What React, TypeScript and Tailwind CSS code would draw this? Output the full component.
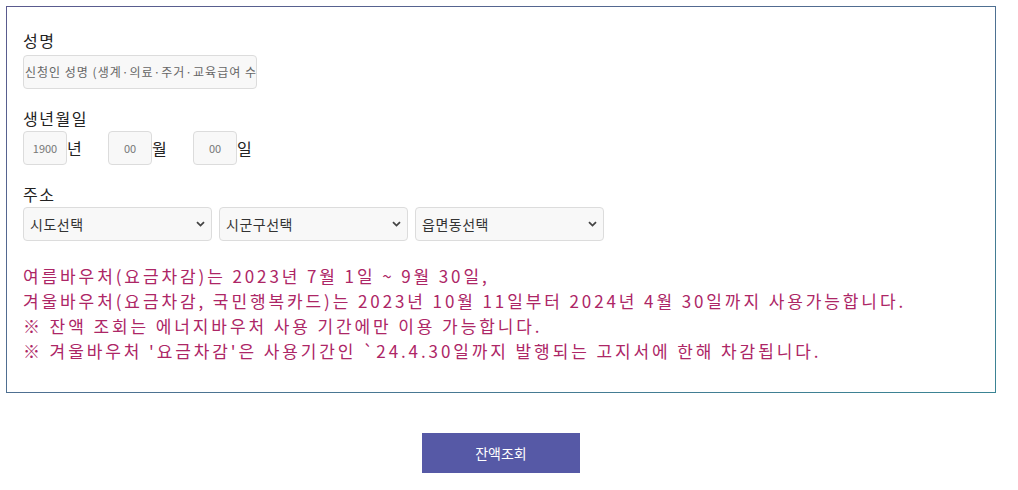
import React from "react";

const Chevron = () => (
  <svg className="pointer-events-none absolute right-[6px] top-1/2 -translate-y-1/2" width="9" height="6" viewBox="0 0 9 6">
    <path d="M1 1.2 L4.5 4.6 L8 1.2" stroke="#444" strokeWidth="1.8" fill="none" />
  </svg>
);

function SelectBox({ label }: { label: string }) {
  return (
    <div className="relative w-[189px] h-[34px] rounded-[4px] border border-[#dcdcdc] bg-[#f8f8f8] flex items-center pl-[6px] text-[14px] text-[#333] tracking-[0.5px]">
      <span>{label}</span>
      <Chevron />
    </div>
  );
}

function DateBox({ value, unit }: { value: string; unit: string }) {
  return (
    <div className="flex items-center w-[85px]">
      <div className="w-[44px] h-[34px] rounded-[4px] border border-[#dcdcdc] bg-[#f8f8f8] flex items-center justify-center text-[11px] text-[#777]">
        {value}
      </div>
      <span className="text-[16px] text-[#222]">{unit}</span>
    </div>
  );
}

export default function App() {
  return (
    <div
      className="w-[1018px] h-[490px] bg-white pt-[6px] pl-[6px]"
      style={{ fontFamily: '"Noto Sans CJK KR", "Noto Sans", sans-serif' }}
    >
      <div className="w-[990px] p-px bg-gradient-to-br from-[#5a5a8e] to-[#3a8494]">
        <div className="bg-white h-[385px] pl-[16px] pt-[22px]">
          <div className="text-[16px] leading-[22px] text-[#222] tracking-[1.5px]">성명</div>
          <div className="mt-[4px] w-[234px] h-[34px] rounded-[4px] border border-[#dcdcdc] bg-[#f8f8f8] flex items-center pl-[1px] text-[12px] text-[#666] overflow-hidden whitespace-nowrap tracking-[1px]">
            신청인 성명 (생계·의료·주거·교육급여 수
          </div>

          <div className="mt-[18px] text-[16px] leading-[22px] text-[#222] tracking-[1.5px]">생년월일</div>
          <div className="mt-[2px] flex">
            <DateBox value="1900" unit="년" />
            <DateBox value="00" unit="월" />
            <DateBox value="00" unit="일" />
          </div>

          <div className="mt-[18px] text-[16px] leading-[22px] text-[#222] tracking-[1.5px]">주소</div>
          <div className="mt-[2px] flex gap-[7px]">
            <SelectBox label="시도선택" />
            <SelectBox label="시군구선택" />
            <SelectBox label="읍면동선택" />
          </div>

          <div className="mt-[22px] text-[17px] leading-[25px] text-[#ad2666] tracking-[2.9px] whitespace-nowrap">
            <div>여름바우처(요금차감)는 2023년 7월 1일 ~ 9월 30일,</div>
            <div>겨울바우처(요금차감, 국민행복카드)는 2023년 10월 11일부터 2024년 4월 30일까지 사용가능합니다.</div>
            <div><span className="font-bold">※</span> 잔액 조회는 에너지바우처 사용 기간에만 이용 가능합니다.</div>
            <div><span className="font-bold">※</span> 겨울바우처 '요금차감'은 사용기간인 `24.4.30일까지 발행되는 고지서에 한해 차감됩니다.</div>
          </div>
        </div>
      </div>
      <div className="w-[990px] flex justify-center mt-[40px]">
        <div className="w-[158px] h-[40px] bg-[#5659a6] text-white text-[14px] flex items-center justify-center">
          잔액조회
        </div>
      </div>
    </div>
  );
}
